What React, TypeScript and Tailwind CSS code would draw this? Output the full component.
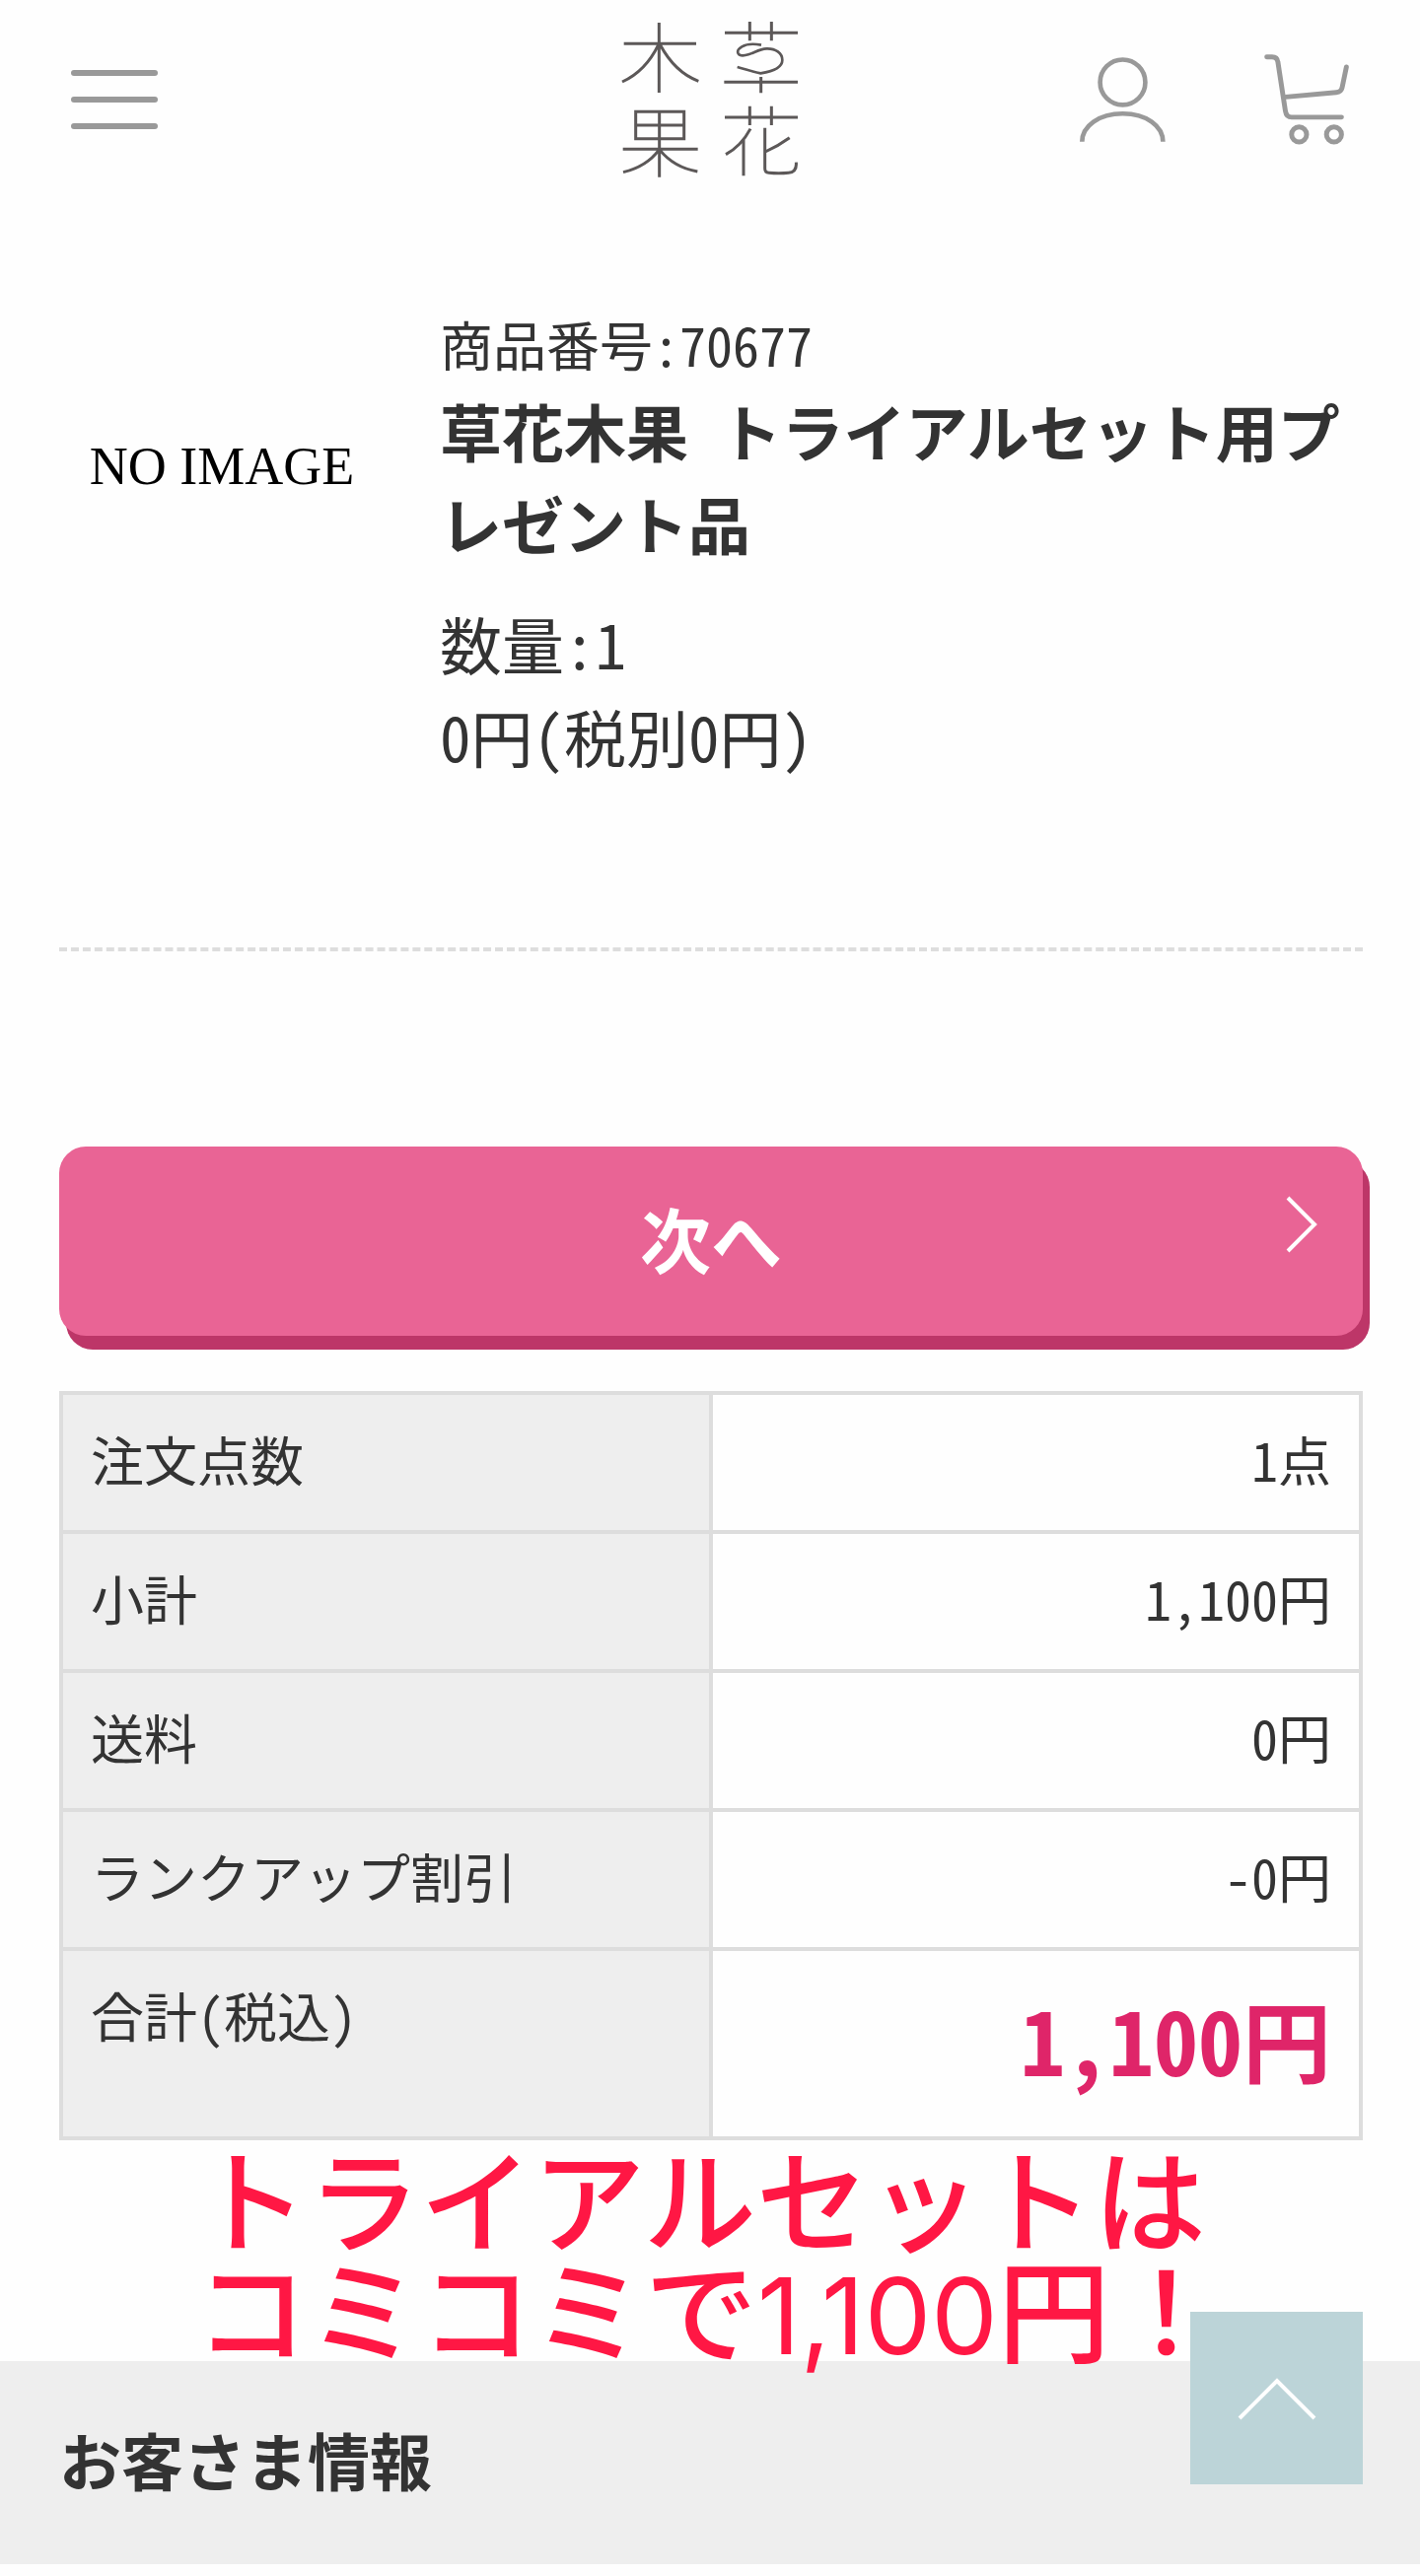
import React from "react";

function Logo() {
  return (
    <svg
      viewBox="90 60 546 486"
      className="h-[162px] w-[182px]"
      fill="none"
      stroke="#5c5858"
      strokeWidth={9}
      role="img"
      aria-label="草花木果"
    >
      <path d="M208 69V282M101 133H321M206 136C182 186 146 226 96 249M211 136C238 186 276 228 328 247" />
      <path d="M137 340H284V422H137ZM137 381H284M209 340V539M98 454H326M207 457C184 488 148 512 99 524M211 457C236 488 276 513 325 522" />
      <path d="M408 100H630M484 66V124M550 66V124M406 250H630M518 234V283" />
      <path
        strokeWidth={8}
        d="M519 137C499 133 474 134 460 142C448 149 446 157 449 163C453 170 466 170 480 166C500 160 512 149 535 148C563 147 583 162 583 183C583 208 549 218 517 223C496 219 476 212 446 204"
      />
      <path d="M408 357H630M484 323V381M550 323V381M486 392C470 422 444 452 411 470M465 425V535M530 389V513Q530 525 542 526Q572 529 602 526Q628 523 625 494M531 462Q572 443 605 419" />
    </svg>
  );
}

function UserIcon() {
  return (
    <svg viewBox="105 115 262 258" className="h-[86px] w-[87px]" fill="none" stroke="#999" strokeWidth={14} aria-hidden="true">
      <circle cx="236" cy="191" r="69" />
      <path d="M112 373C112 325 163 287 236 287S359 325 359 373" />
    </svg>
  );
}

function CartIcon() {
  return (
    <svg
      viewBox="668 104 260 278"
      className="h-[92px] w-[86px]"
      fill="none"
      stroke="#999"
      strokeWidth={15}
      strokeLinecap="round"
      strokeLinejoin="round"
      aria-hidden="true"
    >
      <path d="M676 112H692Q708 112 710 128L733 278Q736 297 752 297H905" />
      <path d="M734 235L889 221Q904 220 907 206L920 143" />
      <circle cx="775" cy="350" r="23" />
      <circle cx="882" cy="350" r="23" />
    </svg>
  );
}

const rows = [
  { label: "注文点数", value: "1点" },
  { label: "小計", value: "1,100円" },
  { label: "送料", value: "0円" },
  { label: "ランクアップ割引", value: "-0円" },
];

export default function App() {
  return (
    <div className="min-h-screen bg-[#fefefe] font-['Noto_Sans_CJK_JP',sans-serif] text-[#333] [font-feature-settings:'hwid']">
      <header className="grid h-[202px] grid-cols-[1fr_auto_1fr] items-center px-[72px]">
        <button type="button" aria-label="メニュー" className="flex w-[88px] flex-col gap-[21px]">
          <span className="h-1.5 rounded-full bg-[#999]" />
          <span className="h-1.5 rounded-full bg-[#999]" />
          <span className="h-1.5 rounded-full bg-[#999]" />
        </button>
        <a href="#top">
          <Logo />
        </a>
        <nav className="flex items-center justify-end gap-[100px]">
          <a href="#account" aria-label="マイページ">
            <UserIcon />
          </a>
          <a href="#cart" aria-label="カート">
            <CartIcon />
          </a>
        </nav>
      </header>

      <main>
        <div className="pr-[58px] pl-[60px]">
          <section className="flex gap-14 border-b-4 border-dashed border-[#ddd] pt-[106px] pb-[168px]">
            <div className="flex size-[330px] shrink-0 items-center justify-center font-['Liberation_Serif',serif] text-[54px] text-black">
              NO IMAGE
            </div>
            <div className="min-w-0 flex-1 text-[63px] leading-[94px]">
              <p className="text-[54px] leading-[81px]">商品番号:70677</p>
              <h1 className="font-bold">草花木果 トライアルセット用プレゼント品</h1>
              <p className="mt-7">数量:1</p>
              <p>0円(税別0円)</p>
            </div>
          </section>

          <button
            type="button"
            className="relative mt-[198px] flex h-[192px] w-full items-center justify-center rounded-[27px] bg-[#e96495] pb-2 text-[72px] font-bold text-white shadow-[7px_14px_0_#bd3668]"
          >
            次へ
            <svg
              viewBox="0 0 32 58"
              className="absolute top-[50px] right-[46px] h-[58px] w-8"
              fill="none"
              stroke="#fff"
              strokeWidth={4}
              aria-hidden="true"
            >
              <path d="M2 2L29 29L2 56" />
            </svg>
          </button>

          <table className="mt-14 w-full table-fixed border-collapse text-[54px] leading-[81px]">
            <tbody>
              {rows.map((row) => (
                <tr key={row.label}>
                  <th scope="row" className="border-4 border-[#ddd] bg-[#eee] px-7 pt-6 pb-8 text-left font-normal">
                    {row.label}
                  </th>
                  <td className="border-4 border-[#ddd] px-7 pt-6 pb-8 text-right">{row.value}</td>
                </tr>
              ))}
              <tr>
                <th scope="row" className="border-4 border-[#ddd] bg-[#eee] px-7 pt-6 pb-8 text-left align-top font-normal">
                  合計(税込)
                </th>
                <td className="border-4 border-[#ddd] px-7 pt-[22px] pb-[34px] text-right text-[90px] leading-[132px] font-bold text-[#df2569]">
                  1,100円
                </td>
              </tr>
            </tbody>
          </table>
        </div>

        <p className="relative z-10 pl-[198px] text-[114px] leading-[112px] font-medium whitespace-nowrap text-[#ff1744] [font-feature-settings:normal]">
          トライアルセットは
          <br />
          コミコミで<span className="font-['Inter',sans-serif] text-[107px] leading-[80px] font-normal">1,100</span>円！
        </p>

        <section className="relative bg-[#eee] pt-[52px] pb-[60px] pl-[60px]">
          <h2 className="text-[63px] leading-[94px] font-bold">お客さま情報</h2>
          <button
            type="button"
            aria-label="ページの先頭へ"
            className="absolute -top-[50px] right-[58px] z-20 flex size-[175px] items-center justify-center bg-[#bcd4d8]"
          >
            <svg viewBox="0 0 80 44" className="h-11 w-20" fill="none" stroke="#fff" strokeWidth={4} aria-hidden="true">
              <path d="M2 42L40 4L78 42" />
            </svg>
          </button>
        </section>
      </main>
    </div>
  );
}
